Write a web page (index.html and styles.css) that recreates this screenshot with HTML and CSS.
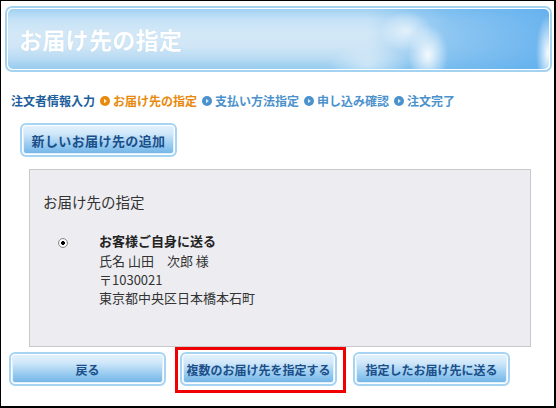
FILE: index.html
```html
<!DOCTYPE html>
<html lang="ja">
<head>
<meta charset="utf-8">
<link rel="stylesheet" href="styles.css">
</head>
<body>
<div class="page">
  <div class="hdr">
    <div class="hdr-in">
      <h1 class="hdr-title">お届け先の指定</h1>
    </div>
  </div>

  <div class="crumbs">
    <span class="crumb done">注文者情報入力</span>
    <svg class="ico" viewBox="0 0 10 10"><circle cx="5" cy="5" r="5" fill="#e8890c"/><path d="M4 2.8 L6.8 5 L4 7.2 Z" fill="#fff3dc"/></svg>
    <span class="crumb cur">お届け先の指定</span>
    <svg class="ico" viewBox="0 0 10 10"><circle cx="5" cy="5" r="5" fill="#4b92cc"/><path d="M4 2.8 L6.8 5 L4 7.2 Z" fill="#d6eafa"/></svg>
    <span class="crumb next">支払い方法指定</span>
    <svg class="ico" viewBox="0 0 10 10"><circle cx="5" cy="5" r="5" fill="#4b92cc"/><path d="M4 2.8 L6.8 5 L4 7.2 Z" fill="#d6eafa"/></svg>
    <span class="crumb next">申し込み確認</span>
    <svg class="ico" viewBox="0 0 10 10"><circle cx="5" cy="5" r="5" fill="#4b92cc"/><path d="M4 2.8 L6.8 5 L4 7.2 Z" fill="#d6eafa"/></svg>
    <span class="crumb next">注文完了</span>
  </div>

  <button class="btn btn-add">新しいお届け先の追加</button>

  <div class="panel">
    <div class="panel-title">お届け先の指定</div>
    <div class="opt">
      <span class="radio"></span>
      <div class="addr">
        <div class="addr-name">お客様ご自身に送る</div>
        <div>氏名 山田　次郎 様</div>
        <div>〒1030021</div>
        <div>東京都中央区日本橋本石町</div>
      </div>
    </div>
  </div>

  <div class="actions">
    <button class="btn btn-sm btn-back">戻る</button>
    <span class="mark"><button class="btn btn-sm">複数のお届け先を指定する</button></span>
    <button class="btn btn-sm btn-send">指定したお届け先に送る</button>
  </div>
</div>
</body>
</html>
```

FILE: styles.css
```css
html, body {
  margin: 0;
  padding: 0;
  background: #fff;
}

.page {
  width: 556px;
  height: 408px;
  box-sizing: border-box;
  border: 1px solid #000;
  border-right-width: 2px;
  border-bottom-width: 2px;
  background: #fff;
  font-family: "Noto Sans CJK JP", "Noto Sans", sans-serif;
  color: #333;
  overflow: hidden;
}

/* header banner */
.hdr {
  margin: 5px 2px 0 4px;
  width: 547px;
  height: 66px;
  box-sizing: border-box;
  border: 2px solid #a3d3f1;
  border-radius: 7px;
  padding: 1px;
  background: #fff;
}

.hdr-in {
  height: 100%;
  border-radius: 5px;
  display: flex;
  align-items: center;
  padding-left: 11px;
  background:
    radial-gradient(ellipse 20px 30px at 420px 46px, rgba(255,255,255,.9), rgba(255,255,255,0) 100%),
    radial-gradient(ellipse 26px 20px at 398px 22px, rgba(255,255,255,.65), rgba(255,255,255,0) 100%),
    radial-gradient(ellipse 12px 38px at 540px 44px, rgba(255,255,255,.95), rgba(255,255,255,0) 100%),
    radial-gradient(ellipse 40px 20px at 360px 56px, rgba(255,255,255,.45), rgba(255,255,255,0) 100%),
    linear-gradient(to right, rgba(100,180,238,0) 0, rgba(100,180,238,0) 360px, rgba(96,176,238,.6) 440px, rgba(90,172,238,.85) 100%),
    linear-gradient(to bottom, #a2d2f2 0, #c6e2f6 18%, #d3e8f7 40%, #d0e6f6 62%, #b9dbf3 82%, #96ccef 100%);
}

.hdr-title {
  margin: 0;
  font-size: 23px;
  font-weight: 700;
  color: #fff;
  letter-spacing: 0.3px;
  line-height: 1;
  text-shadow: 0 0 1px rgba(150,190,220,.6);
}

/* breadcrumb */
.crumbs {
  margin: 21px 0 0 10px;
  height: 16px;
  display: flex;
  align-items: center;
  font-size: 12px;
  font-weight: 700;
  line-height: 16px;
  white-space: nowrap;
}

.crumb.done { color: #1f5f9c; }
.crumb.cur { color: #e8890c; }
.crumb.next { color: #4b92cc; }

.ico {
  width: 10px;
  height: 10px;
  margin: 0 3px 0 5px;
  flex: none;
}

/* buttons */
.btn {
  display: flex;
  align-items: center;
  justify-content: center;
  width: 157px;
  height: 34px;
  box-sizing: border-box;
  padding: 0;
  border: 2px solid #a6d4f2;
  border-radius: 6px;
  box-shadow: inset 0 0 0 1px #fdfeff, inset 0 0 0 2px #e2f1fc;
  background: linear-gradient(to bottom, #e4f2fc 0, #cfe7f9 30%, #a8d3f3 55%, #86c1ec 80%, #6cb0e4 100%);
  font-family: "Noto Sans CJK JP", "Noto Sans", sans-serif;
  font-weight: 700;
  color: #1b4f8a;
  cursor: pointer;
}

.btn-add {
  margin: 14px 0 0 19px;
  font-size: 13px;
  letter-spacing: 0.4px;
}

.btn-sm {
  font-size: 12px;
}

/* panel */
.panel {
  margin: 12px 0 0 28px;
  width: 502px;
  height: 178px;
  box-sizing: border-box;
  border: 1px solid #c9c9cb;
  background: #ededf1;
  padding: 22px 0 0 13px;
}

.panel-title {
  font-size: 14.5px;
  line-height: 20px;
  color: #333;
}

.opt {
  margin-top: 20px;
  display: flex;
  align-items: flex-start;
}

.radio {
  flex: none;
  width: 8px;
  height: 8px;
  margin: 6px 0 0 15px;
  border: 1px solid #8a8a8a;
  border-radius: 50%;
  background: radial-gradient(circle, #000 0, #000 1.6px, #fff 2.2px);
  box-shadow: inset 0 0 0 1px #f2f2f2;
}

.addr {
  margin-left: 31px;
  font-size: 13px;
  line-height: 18.5px;
  color: #333;
}

.addr-name {
  font-weight: 700;
  color: #222;
  margin-bottom: 1.5px;
}

/* bottom actions */
.actions {
  margin: 0 0 0 8px;
  display: flex;
  align-items: flex-start;
}

.btn-back,
.btn-send {
  margin-top: 5px;
}

.btn-back { margin-right: 9px; }

.mark {
  display: block;
  border: 3px solid #f00000;
  padding: 2px 6px 4px 2px;
  margin-right: 7px;
}
```
